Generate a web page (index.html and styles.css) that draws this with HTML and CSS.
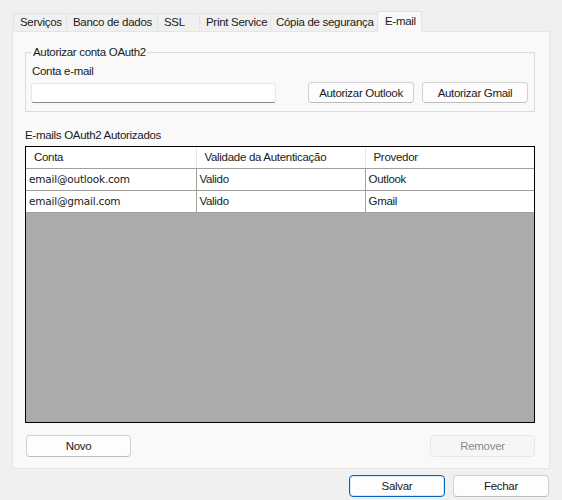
FILE: index.html
```html
<!DOCTYPE html>
<html lang="pt">
<head>
    <meta charset="UTF-8">
    <title>Configurações</title>
    <link rel="stylesheet" href="styles.css">
</head>
<body>
    <div class="tabs">
        <div class="tab tab-servicos">Serviços</div>
        <div class="tab tab-banco">Banco de dados</div>
        <div class="tab tab-ssl">SSL</div>
        <div class="tab tab-print">Print Service</div>
        <div class="tab tab-copia">Cópia de segurança</div>
        <div class="tab tab-email active">E-mail</div>
    </div>
    <div class="panel">
        <fieldset class="group">
            <legend>Autorizar conta OAuth2</legend>
            <div class="auth-row">
                <div class="field">
                    <label for="conta">Conta e-mail</label>
                    <input id="conta" class="text-input" type="text">
                </div>
                <div class="auth-buttons">
                    <button class="btn btn-auth">Autorizar Outlook</button>
                    <button class="btn btn-auth">Autorizar Gmail</button>
                </div>
            </div>
        </fieldset>

        <div class="grid-label">E-mails OAuth2 Autorizados</div>
        <div class="grid">
            <table>
                <thead>
                    <tr>
                        <th>Conta</th>
                        <th>Validade da Autenticação</th>
                        <th>Provedor</th>
                    </tr>
                </thead>
                <tbody>
                    <tr>
                        <td class="email">email@outlook.com</td>
                        <td>Valido</td>
                        <td>Outlook</td>
                    </tr>
                    <tr>
                        <td class="email">email@gmail.com</td>
                        <td>Valido</td>
                        <td>Gmail</td>
                    </tr>
                </tbody>
            </table>
        </div>

        <div class="grid-actions">
            <button class="btn btn-grid">Novo</button>
            <button class="btn btn-grid" disabled>Remover</button>
        </div>
    </div>
    <div class="footer">
        <button class="btn btn-footer primary">Salvar</button>
        <button class="btn btn-footer">Fechar</button>
    </div>
</body>
</html>
```

FILE: styles.css
```css
* {
    box-sizing: border-box;
}
body {
    margin: 0;
    width: 562px;
    height: 500px;
    background-color: #f0f0f0;
    font-family: "Liberation Sans", Arial, sans-serif;
    font-size: 11.5px;
    letter-spacing: -0.3px;
    color: #1a1a1a;
    overflow: hidden;
}

/* abas */
.tabs {
    display: flex;
    align-items: flex-end;
    height: 31px;
    padding-left: 13px;
}
.tab {
    height: 18px;
    line-height: 17px;
    padding: 0 0 0 6px;
    border: 1px solid #e3e3e3;
    border-bottom: none;
    border-right: none;
    white-space: nowrap;
    overflow: hidden;
}
.tab-servicos { width: 53px; }
.tab-banco { width: 91px; }
.tab-ssl { width: 42px; }
.tab-print { width: 71px; }
.tab-copia { width: 107px; padding-left: 5px; }
.tab.active {
    width: 45px;
    height: 21px;
    line-height: 19px;
    padding-left: 7px;
    background-color: #f9f9f9;
    border: 1px solid #e3e3e3;
    border-bottom: none;
    position: relative;
    top: 1px;
}

.panel {
    margin-left: 12px;
    width: 538px;
    height: 438px;
    padding: 13px 14px 0 12px;
    background-color: #f9f9f9;
    border: 1px solid #e5e5e5;
}

/* grupo */
.group {
    margin: 0;
    padding: 4px 6px 8px 6px;
    border: 1px solid #dcdcdc;
    width: 510px;
}
.group legend {
    padding: 0 1px;
    line-height: 15px;
}
.auth-row {
    display: flex;
    align-items: flex-end;
    justify-content: space-between;
}
.field label {
    display: block;
    line-height: 15px;
    margin-bottom: 4px;
}
.text-input {
    display: block;
    width: 245px;
    height: 20px;
    margin: 0 0 0 -1px;
    border: 1px solid #e6e6e6;
    border-bottom: 1px solid #868686;
    border-radius: 3px;
    background-color: #fff;
    font: inherit;
}
.auth-buttons {
    display: flex;
    gap: 8px;
}

/* botões */
.btn {
    height: 21px;
    padding: 0;
    background-color: #fdfdfd;
    border: 1px solid #d1d1d1;
    border-bottom-color: #bdbdbd;
    border-radius: 4px;
    font: inherit;
    letter-spacing: inherit;
    color: #1a1a1a;
}
.btn:disabled {
    background-color: #f6f6f6;
    border-color: #e8e8e8;
    color: #8a8a8a;
}
.btn-auth {
    width: 106px;
}
.btn-grid {
    width: 105px;
    height: 22px;
}
.btn-footer {
    width: 96px;
    height: 22px;
}
.btn.primary {
    border: 1px solid #0067c0;
    box-shadow: inset 0 0 0 1px #d6e6f5;
}

/* grade */
.grid-label {
    margin-top: 16px;
    margin-bottom: 3px;
    line-height: 15px;
}
.grid {
    width: 510px;
    height: 277px;
    border: 1px solid #000;
    background-color: #ababab;
}
.grid table {
    width: 508px;
    border-collapse: collapse;
    table-layout: fixed;
    background-color: #fff;
}
.grid th {
    height: 21px;
    padding: 0 0 0 8px;
    text-align: left;
    font-weight: normal;
    border-right: 1px solid #e5e5e5;
    border-bottom: 1px solid #a0a0a0;
}
.grid th:first-child,
.grid td:first-child {
    width: 170px;
}
.grid th:nth-child(2),
.grid td:nth-child(2) {
    width: 169px;
}
.grid td {
    height: 22px;
    padding: 0 0 0 3px;
    border-right: 1px solid #a0a0a0;
    border-bottom: 1px solid #a0a0a0;
    white-space: nowrap;
}
.grid td:last-child,
.grid th:last-child {
    border-right: none;
}
.grid td.email {
    font-family: "DejaVu Sans", Verdana, sans-serif;
    font-size: 10.5px;
    letter-spacing: -0.2px;
}

.grid-actions {
    display: flex;
    justify-content: space-between;
    margin-top: 12px;
    padding: 0 0 0 1px;
}

.footer {
    display: flex;
    justify-content: flex-end;
    gap: 8px;
    margin-top: 6px;
    padding-right: 13px;
}
```
